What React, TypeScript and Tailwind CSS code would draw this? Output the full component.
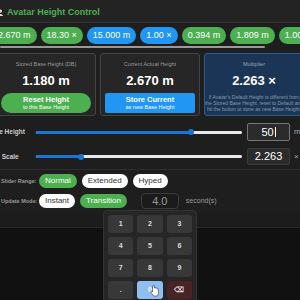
import React from 'react';

const font = { fontFamily: '"Liberation Sans", Arial, sans-serif' };

function Pill({ text, color }: { text: string; color: 'green' | 'blue' }) {
  return (
    <div
      className={`h-[17px] shrink-0 rounded-full px-[6px] flex items-center text-[9px] text-white whitespace-nowrap ${
        color === 'green' ? 'bg-[#4caf50]' : 'bg-[#2196f3]'
      }`}
    >
      {text}
    </div>
  );
}

function Slider({ pct }: { pct: number }) {
  return (
    <div className="relative w-[206px] h-[3px] shrink-0 rounded-full bg-[#e8e8e8]">
      <div className="h-full rounded-full bg-[#1976d2]" style={{ width: `${pct}%` }} />
      <div
        className="absolute top-1/2 -translate-y-1/2 -translate-x-1/2 w-[6px] h-[6px] rounded-full bg-[#1976d2]"
        style={{ left: `${pct}%` }}
      />
    </div>
  );
}

function Chip({ text, active }: { text: string; active?: boolean }) {
  return (
    <div
      className={`h-[14px] shrink-0 rounded-full px-[6px] flex items-center text-[8px] whitespace-nowrap ${
        active ? 'bg-[#4caf50] text-white' : 'bg-white text-[#333]'
      }`}
    >
      {text}
    </div>
  );
}

const keys = ['1', '2', '3', '4', '5', '6', '7', '8', '9', '.', '0', '⌫'];

export default function App() {
  return (
    <div className="relative w-[300px] h-[300px] overflow-hidden bg-[#111] text-white" style={font}>
      {/* header */}
      <div className="h-[23px] bg-[#232323] border-b border-[#333] flex items-center gap-[3px] -ml-[3px] pt-[3px]">
        <svg width="7" height="7" viewBox="0 0 10 10">
          <circle cx="5" cy="3" r="2.2" fill="#ddd" />
          <path d="M1 10 Q5 4 9 10Z" fill="#ddd" />
        </svg>
        <span className="text-[9px] font-bold text-[#4caf50]">Avatar Height Control</span>
      </div>

      <div className="bg-[#1e1e1e]">
        {/* pills */}
        <div className="flex gap-[4px] -ml-[8px] pt-[4px]">
          <Pill text="2.670 m" color="green" />
          <Pill text="18.30 ×" color="green" />
          <Pill text="15.000 m" color="blue" />
          <Pill text="1.00 ×" color="blue" />
          <Pill text="0.394 m" color="green" />
          <Pill text="1.809 m" color="green" />
          <Pill text="1.00 ×" color="green" />
        </div>
        <div className="h-[2px] w-[265px] bg-[#999] mt-[2px] rounded-full" />

        {/* cards */}
        <div className="flex gap-[4px] -ml-[4px] mt-[5px]">
          <div className="w-[100px] h-[63px] shrink-0 rounded-[3px] border border-[#444] bg-[#262626] flex flex-col items-center px-[4px] pt-[6px]">
            <div className="text-[5.5px] text-[#999]">Stored Base Height (DB)</div>
            <div className="text-[13px] font-bold mt-[6px] leading-none">1.180 m</div>
            <div className="mt-[6px] w-full h-[20px] rounded-full bg-[#4caf50] flex flex-col items-center justify-center leading-none">
              <div className="text-[7.5px] font-bold">Reset Height</div>
              <div className="text-[5.5px] mt-[1px]">to this Base Height</div>
            </div>
          </div>
          <div className="w-[100px] h-[63px] shrink-0 rounded-[3px] border border-[#444] bg-[#262626] flex flex-col items-center px-[4px] pt-[6px]">
            <div className="text-[5.5px] text-[#999]">Current Actual Height</div>
            <div className="text-[13px] font-bold mt-[6px] leading-none">2.670 m</div>
            <div className="mt-[6px] w-full h-[20px] rounded-[2px] bg-[#2196f3] flex flex-col items-center justify-center leading-none">
              <div className="text-[7.5px] font-bold">Store Current</div>
              <div className="text-[5.5px] mt-[1px]">as new Base Height</div>
            </div>
          </div>
          <div className="w-[100px] h-[63px] shrink-0 rounded-[3px] border border-[#2f5a8c] bg-[#1b3556] flex flex-col items-center px-[2px] pt-[6px]">
            <div className="text-[5.5px] text-[#9aa]">Multiplier</div>
            <div className="text-[13px] font-bold mt-[6px] leading-none">2.263 ×</div>
            <div className="mt-[7px] text-[5px] leading-[6px] text-[#8899aa] text-center whitespace-nowrap">
              If Avatar's Default Height is different from
              <br />
              the Stored Base Height, reset to Default and
              <br />
              hit the button to store as new Base Height.
            </div>
          </div>
        </div>

        {/* sliders */}
        <div className="flex flex-col gap-[7px] mt-[7px] -ml-[30px]">
          <div className="flex items-center">
            <div className="w-[66px] shrink-0 pl-[5px] text-[6.5px] font-bold text-[#ccc] whitespace-nowrap">Absolute Height</div>
            <Slider pct={75} />
            <div className="ml-[5px] w-[43px] h-[18px] shrink-0 rounded-[2px] border border-[#777] bg-[#2b2b2b] flex items-center justify-center text-[11px]">
              50<span className="w-px h-[10px] bg-white ml-[1px]" />
            </div>
            <span className="ml-[4px] text-[8px] text-[#aaa]">m</span>
          </div>
          <div className="flex items-center">
            <div className="w-[66px] shrink-0 pl-[5px] text-[6.5px] font-bold text-[#ccc] whitespace-nowrap">Relative Scale</div>
            <Slider pct={22} />
            <div className="ml-[5px] w-[43px] h-[17px] shrink-0 rounded-[2px] border border-[#3a3a3a] bg-[#2b2b2b] flex items-center justify-center text-[11px]">
              2.263
            </div>
            <span className="ml-[4px] text-[8px] text-[#aaa]">×</span>
          </div>
        </div>

        {/* options */}
        <div className="mt-[4px] border-t border-[#2e2e2e] pt-[4px] pb-[4px] flex flex-col gap-[5px]">
          <div className="flex items-center gap-[5px]">
            <div className="w-[34px] shrink-0 text-[5.5px] font-bold text-[#999] pl-[1px] whitespace-nowrap">Slider Range:</div>
            <Chip text="Normal" active />
            <Chip text="Extended" />
            <Chip text="Hyped" />
          </div>
          <div className="flex items-center gap-[5px]">
            <div className="w-[34px] shrink-0 text-[5.5px] font-bold text-[#999] pl-[1px] whitespace-nowrap">Update Mode:</div>
            <Chip text="Instant" />
            <Chip text="Transition" active />
            <div className="ml-[9px] w-[38px] h-[16px] rounded-[4px] border border-[#3a3a3a] bg-[#1b1b1b] flex items-center justify-center text-[11px] text-[#999]">
              4.0
            </div>
            <span className="text-[7px] text-[#999] ml-[2px]">second(s)</span>
          </div>
        </div>
      </div>

      {/* bottom bar */}
      <div className="h-[15px] bg-[#1c1c1c] border-b border-[#2a2a2a]" />

      {/* numpad */}
      <div className="absolute left-[103px] top-[210px] w-[94px] h-[100px] rounded-[4px] bg-[#262626] border border-[#333] p-[4px] grid grid-cols-3 gap-[4px] content-start">
        {keys.map(k => (
          <div
            key={k}
            className={`relative h-[18px] rounded-[3px] flex items-center justify-center text-[7px] font-bold ${
              k === '0'
                ? 'bg-[#8fbff0] text-white'
                : k === '⌫'
                ? 'bg-[#4a2424] text-[#ddd]'
                : 'bg-[#383838] text-[#ddd]'
            }`}
          >
            {k}
            {k === '0' && (
              <svg className="absolute left-[13px] top-[4px]" width="9" height="12" viewBox="0 0 9 12">
                <path d="M2.5 1 v6 l-1 -1 q-1 0 -0.5 1.2 l2.5 3.8 h4 l1 -3 v-3 q0 -0.8 -0.8 -0.8 v-0.5 q0 -0.8 -0.8 -0.8 q-0.8 0 -0.8 0.5 q0 -0.8 -0.8 -0.8 q-0.8 0 -0.8 0.5 v-2 q0 -1 -0.6 -1 q-0.6 0 -0.6 1z" fill="white" stroke="#333" strokeWidth="0.6" />
              </svg>
            )}
          </div>
        ))}
      </div>
    </div>
  );
}
